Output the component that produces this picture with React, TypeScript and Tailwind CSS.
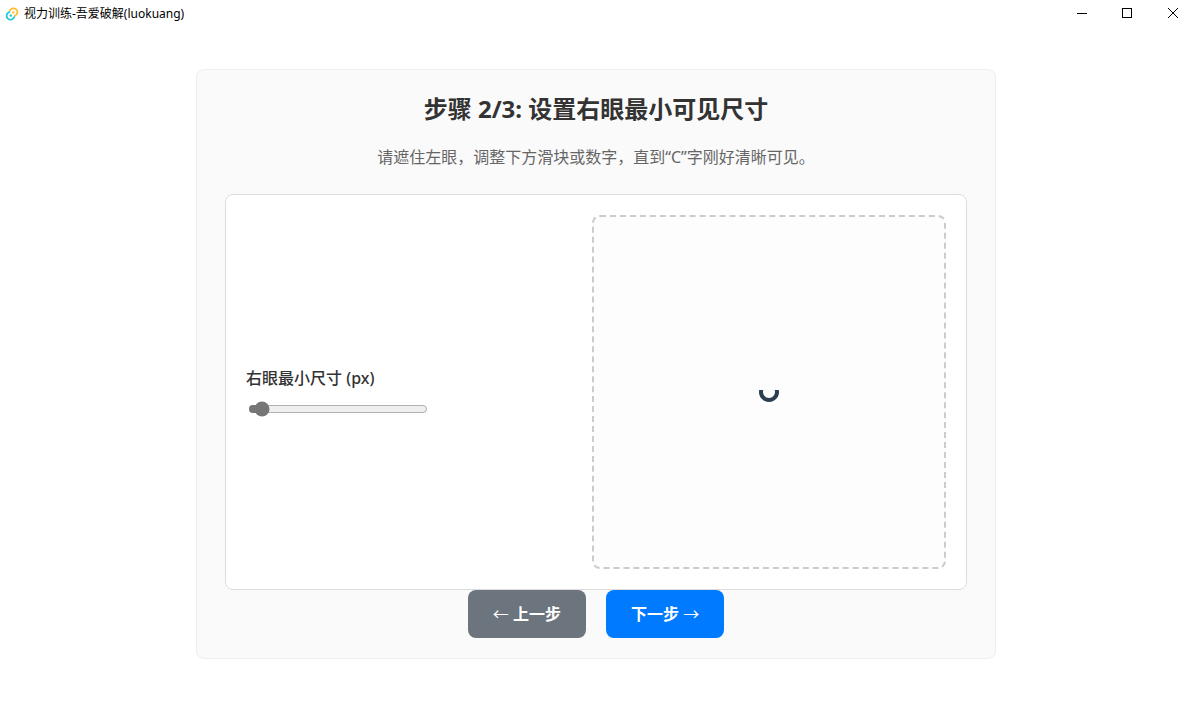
import React, { useState } from 'react';

const TauriLogo: React.FC = () => (
  <svg width="14" height="14" viewBox="0 0 28 28" fill="none" aria-hidden="true">
    <path
      d="M9.5 8A7.8 7.8 0 1 1 19.5 17.8"
      stroke="#FFC131"
      strokeWidth="3.6"
      strokeLinecap="round"
    />
    <path
      d="M18.5 20A7.8 7.8 0 1 1 8.5 10.2"
      stroke="#24C8DB"
      strokeWidth="3.6"
      strokeLinecap="round"
    />
    <circle cx="16.5" cy="11" r="2.4" fill="#FFC131" />
    <circle cx="11.5" cy="17" r="2.4" fill="#24C8DB" />
  </svg>
);

const TitleBar: React.FC = () => (
  <header className="flex h-7 items-center justify-between pl-[5px] text-black">
    <div className="flex items-center gap-[5px]">
      <TauriLogo />
      <span className="text-xs">视力训练-吾爱破解(luokuang)</span>
    </div>
    <div className="flex gap-3">
      <button type="button" aria-label="最小化" className="flex h-7 w-[34px] items-center justify-center">
        <svg width="12" height="12" viewBox="0 0 12 12" fill="none" stroke="currentColor" shapeRendering="crispEdges">
          <path d="M2 5.5h10" />
        </svg>
      </button>
      <button type="button" aria-label="最大化" className="flex h-7 w-[34px] items-center justify-center">
        <svg width="12" height="12" viewBox="0 0 12 12" fill="none" stroke="currentColor" shapeRendering="crispEdges">
          <path d="M1.5 .5h9v9h-9z" />
        </svg>
      </button>
      <button type="button" aria-label="关闭" className="flex h-7 w-[34px] items-center justify-center">
        <svg width="12" height="12" viewBox="0 0 12 12" fill="none" stroke="currentColor">
          <path d="M1 0l10 10M11 0L1 10" />
        </svg>
      </button>
    </div>
  </header>
);

// Optotype ring with the gap facing up
const RingC: React.FC<{ size: number }> = ({ size }) => (
  <svg width={size} height={size} viewBox="0 0 20 20" aria-hidden="true">
    <path d="M.2 8A10 10 0 1 0 19.8 8H15.66A6 6 0 1 1 4.34 8Z" fill="#2c3e50" />
  </svg>
);

const App: React.FC = () => {
  const [size, setSize] = useState(20);

  return (
    <div className="min-h-screen bg-white font-['Noto_Sans','Noto_Sans_CJK_SC',sans-serif] text-[#333]">
      <TitleBar />

      <main className="pt-[41px] pr-5 pb-10 pl-[22px]">
        <section className="mx-auto max-w-[800px] rounded-lg border border-[#eee] bg-[#fafafa] px-7 pt-[19px] pb-5">
          <h1 className="text-center text-2xl leading-10 font-bold">步骤 2/3: 设置右眼最小可见尺寸</h1>
          <p className="mt-4 text-center text-base text-[#666]">
            请遮住左眼，调整下方滑块或数字，直到“C”字刚好清晰可见。
          </p>

          <div className="mt-[25px] flex items-center justify-between rounded-lg border border-[#ddd] bg-white p-5">
            <div className="flex flex-col items-start gap-[11px] pb-0.5">
              <label htmlFor="right-eye-size" className="text-base font-medium">
                右眼最小尺寸 (px)
              </label>
              <input
                id="right-eye-size"
                type="range"
                min="10"
                max="300"
                value={size}
                onChange={(e) => setSize(parseInt(e.target.value))}
                className="mx-0.5 h-4 w-[180px] accent-[#767676]"
              />
            </div>
            <div className="flex size-[354px] items-center justify-center rounded-lg border-2 border-dashed border-[#ccc] bg-[#fdfdfd]">
              <RingC size={size} />
            </div>
          </div>

          <div className="flex justify-center gap-5">
            <button
              type="button"
              className="h-12 rounded-lg bg-[#6c757d] px-[25px] text-base font-bold text-white hover:bg-[#5a6268]"
            >
              <span className="font-normal">←</span> 上一步
            </button>
            <button
              type="button"
              className="h-12 rounded-lg bg-[#007bff] px-[25px] text-base font-bold text-white hover:bg-[#0069d9]"
            >
              下一步 <span className="font-normal">→</span>
            </button>
          </div>
        </section>
      </main>
    </div>
  );
};

export default App;
